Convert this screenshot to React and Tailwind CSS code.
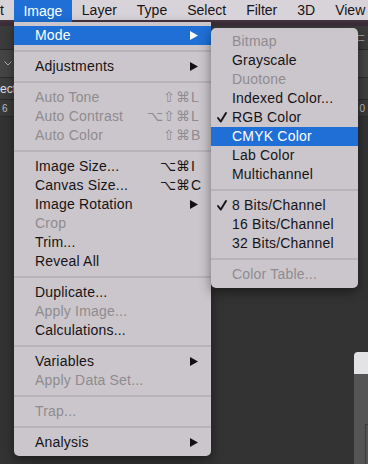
import React from "react";

const FONT = { fontFamily: '"Liberation Sans", Arial, sans-serif' };
const SYM = { fontFamily: '"DejaVu Sans", "Liberation Sans", sans-serif' };

function Arrow({ white }) {
  return (
    <svg width="8" height="9" viewBox="0 0 8 9" className="ml-[-1px]">
      <polygon points="0,0 8,4.5 0,9" fill={white ? "#ffffff" : "#111111"} />
    </svg>
  );
}

function Check() {
  return (
    <svg width="10" height="11" viewBox="0 0 10 11">
      <polyline
        points="1,6 3.8,9.6 9,1"
        fill="none"
        stroke="#161416"
        strokeWidth="1.9"
        strokeLinecap="round"
        strokeLinejoin="round"
      />
    </svg>
  );
}

function Sep() {
  return (
    <div className="h-[12px] flex items-center">
      <div className="h-[2px] w-full bg-[#b8b3b8]" />
    </div>
  );
}

function Item({ label, disabled, mods, keyChar, arrow, active }) {
  const color = active ? "text-white" : disabled ? "text-[#8f8b8f]" : "text-[#161416]";
  return (
    <div
      className={`h-[19px] flex items-center pl-[21px] text-[14px] tracking-[0.2px] ${color} ${
        active ? "bg-[#1f6fd6]" : ""
      }`}
    >
      <span className="flex-1 whitespace-nowrap">{label}</span>
      {mods && (
        <span className="flex items-center text-[14px]" style={SYM}>
          {mods.includes("⌥") && <span className="w-[16px] text-left">⌥</span>}
          {mods.includes("⇧") && <span className="w-[13px] text-left">⇧</span>}
          {mods.includes("⌘") && <span className="w-[15px] text-left">⌘</span>}
        </span>
      )}
      <span className="w-[20px] flex items-center text-[14px]">
        {keyChar}
        {arrow && <Arrow white={active} />}
      </span>
    </div>
  );
}

function SubItem({ label, disabled, check, active }) {
  const color = active ? "text-white" : disabled ? "text-[#8f8b8f]" : "text-[#161416]";
  return (
    <div
      className={`h-[19px] flex items-center pl-[6px] text-[14px] tracking-[0.2px] ${color} ${
        active ? "bg-[#1f6fd6]" : ""
      }`}
    >
      <span className="w-[15px] flex items-center">{check ? <Check /> : null}</span>
      <span className="whitespace-nowrap">{label}</span>
    </div>
  );
}

export default function App() {
  const bar = ["Layer", "Type", "Select", "Filter", "3D", "View"];
  return (
    <div
      className="relative w-[368px] h-[464px] overflow-hidden bg-[#333333] flex flex-col"
      style={FONT}
    >
      {/* menu bar */}
      <div className="h-[22px] flex text-[14px] text-[#161416] bg-[linear-gradient(to_bottom,#d8d3d9_20px,#45343f_20px)]">
        <div className="h-[20px] flex items-center pr-[10px]">t</div>
        <div className="h-[22px] flex items-center px-[9.5px] bg-[#1f6fd6] text-white">Image</div>
        {bar.map((b) => (
          <div key={b} className="h-[20px] flex items-center px-[10px] whitespace-nowrap">
            {b}
          </div>
        ))}
      </div>

      {/* photoshop background UI */}
      <div className="h-[4px] bg-[#3b2e39]" />
      <div className="h-[24px] bg-[#3c3c3c] border-b border-[#2a2a2a] flex items-center justify-end pr-[3px]">
        <span className="text-[#9a9a9a] text-[11px]">⊏</span>
      </div>
      <div className="h-[29px] bg-[#454545] border-b border-[#2c2c2c] flex items-center pl-[4px]">
        <svg width="8" height="5" viewBox="0 0 8 5">
          <polyline points="0.5,0.5 4,4 7.5,0.5" fill="none" stroke="#b0b0b0" strokeWidth="1" />
        </svg>
      </div>
      <div className="h-[22px] bg-[#3e3e3e] border-b border-[#2a2a2a] flex items-center text-[12px] text-[#e6e6e6]">
        <span>ecta</span>
      </div>
      <div className="h-[17px] bg-[#3a3a3a] border-b border-[#2c2c2c] flex items-center justify-between text-[10px] text-[#bdbdbd] px-[2px]">
        <span>6</span>
        <span className="pr-[1px]">0</span>
      </div>
      <div className="flex-1 flex justify-end items-start pt-[235px]">
        <div className="w-[14px] flex flex-col">
          <div className="h-[22px] bg-[#e3e2e4] rounded-tl-[4px]" />
          <div className="h-[90px] bg-[#555555] pt-[50px] pl-[11px]">
            <div className="h-full border-l border-t border-[#3c3c3c]" />
          </div>
        </div>
      </div>

      {/* Image menu */}
      <div className="absolute left-[14px] top-[22px] w-[197px] bg-[#cbc6cb] rounded-b-[5px] pt-[4px] pb-[4px] shadow-[0_4px_12px_rgba(0,0,0,0.45)]">
        <Item label="Mode" arrow active />
        <Sep />
        <Item label="Adjustments" arrow />
        <Sep />
        <Item label="Auto Tone" disabled mods="⇧⌘" keyChar="L" />
        <Item label="Auto Contrast" disabled mods="⌥⇧⌘" keyChar="L" />
        <Item label="Auto Color" disabled mods="⇧⌘" keyChar="B" />
        <Sep />
        <Item label="Image Size..." mods="⌥⌘" keyChar="I" />
        <Item label="Canvas Size..." mods="⌥⌘" keyChar="C" />
        <Item label="Image Rotation" arrow />
        <Item label="Crop" disabled />
        <Item label="Trim..." />
        <Item label="Reveal All" />
        <Sep />
        <Item label="Duplicate..." />
        <Item label="Apply Image..." disabled />
        <Item label="Calculations..." />
        <Sep />
        <Item label="Variables" arrow />
        <Item label="Apply Data Set..." disabled />
        <Sep />
        <Item label="Trap..." disabled />
        <Sep />
        <Item label="Analysis" arrow />
      </div>

      {/* Mode submenu */}
      <div className="absolute left-[211px] top-[28px] w-[147px] bg-[#cbc6cb] rounded-[5px] py-[4px] shadow-[0_4px_12px_rgba(0,0,0,0.45)]">
        <SubItem label="Bitmap" disabled />
        <SubItem label="Grayscale" />
        <SubItem label="Duotone" disabled />
        <SubItem label="Indexed Color..." />
        <SubItem label="RGB Color" check />
        <SubItem label="CMYK Color" active />
        <SubItem label="Lab Color" />
        <SubItem label="Multichannel" />
        <Sep />
        <SubItem label="8 Bits/Channel" check />
        <SubItem label="16 Bits/Channel" />
        <SubItem label="32 Bits/Channel" />
        <Sep />
        <SubItem label="Color Table..." disabled />
      </div>
    </div>
  );
}
